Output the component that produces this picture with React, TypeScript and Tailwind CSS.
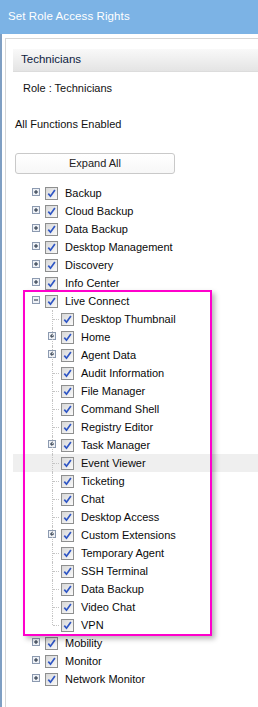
import React from 'react';

type Node = { label: string; expand?: 'plus' | 'minus'; children?: Node[] };

const tree: Node[] = [
  { label: 'Backup', expand: 'plus' },
  { label: 'Cloud Backup', expand: 'plus' },
  { label: 'Data Backup', expand: 'plus' },
  { label: 'Desktop Management', expand: 'plus' },
  { label: 'Discovery', expand: 'plus' },
  { label: 'Info Center', expand: 'plus' },
  {
    label: 'Live Connect',
    expand: 'minus',
    children: [
      { label: 'Desktop Thumbnail' },
      { label: 'Home', expand: 'plus' },
      { label: 'Agent Data', expand: 'plus' },
      { label: 'Audit Information' },
      { label: 'File Manager' },
      { label: 'Command Shell' },
      { label: 'Registry Editor' },
      { label: 'Task Manager', expand: 'plus' },
      { label: 'Event Viewer' },
      { label: 'Ticketing' },
      { label: 'Chat' },
      { label: 'Desktop Access' },
      { label: 'Custom Extensions', expand: 'plus' },
      { label: 'Temporary Agent' },
      { label: 'SSH Terminal' },
      { label: 'Data Backup' },
      { label: 'Video Chat' },
      { label: 'VPN' },
    ],
  },
  { label: 'Mobility', expand: 'plus' },
  { label: 'Monitor', expand: 'plus' },
  { label: 'Network Monitor', expand: 'plus' },
];

function Expander({ kind }: { kind: 'plus' | 'minus' }) {
  return (
    <svg width="8" height="8" viewBox="0 0 8 8" className="shrink-0 -mt-[3px]">
      <rect x="0.5" y="0.5" width="7" height="7" fill="#eef1f6" stroke="#8c9ab0" />
      <path d="M2 4h4" stroke="#1c2a3c" strokeWidth="1" />
      {kind === 'plus' && <path d="M4 2v4" stroke="#1c2a3c" strokeWidth="1" />}
    </svg>
  );
}

function Check() {
  return (
    <svg width="13" height="13" viewBox="0 0 13 13" className="shrink-0">
      <defs>
        <linearGradient id="cbg" x1="0" y1="0" x2="1" y2="1">
          <stop offset="0" stopColor="#d6d6d6" />
          <stop offset="1" stopColor="#fbfbfb" />
        </linearGradient>
      </defs>
      <rect x="0.5" y="0.5" width="12" height="12" fill="url(#cbg)" stroke="#8e8f8f" />
      <path d="M3.3 6.6l2.2 2.6 4.4-6.2" fill="none" stroke="#2f56c4" strokeWidth="1.7" />
    </svg>
  );
}

function Row({ node, level, last }: { node: Node; level: number; last?: boolean }) {
  const highlight = node.label === 'Event Viewer';
  return (
    <div
      className={`relative flex items-center h-[18px] ${highlight ? 'bg-[#efefef]' : ''} ${
        level === 0 ? 'pl-[19px]' : 'pl-[35px]'
      }`}
    >
      {level === 1 && (
        <>
          <span
            className={`absolute left-[39px] top-0 w-0 border-l border-dotted border-[#c4c4c4] ${
              last ? 'h-[9px]' : 'h-[18px]'
            }`}
          />
          {!node.expand && (
            <span className="absolute left-[40px] top-[9px] w-[6px] border-t border-dotted border-[#c4c4c4]" />
          )}
        </>
      )}
      <span className="w-[9px] flex items-center">{node.expand && <Expander kind={node.expand} />}</span>
      <span className="ml-[4px] flex">
        <Check />
      </span>
      <span className="ml-[7px] text-[11px] text-[#0a0a0a] whitespace-nowrap">{node.label}</span>
    </div>
  );
}

export default function App() {
  return (
    <div className="relative w-[258px] h-[707px] bg-white overflow-hidden font-['Liberation_Sans',Arial,sans-serif]">
      <div className="h-[34px] bg-[#7cb3e5] text-white text-[11.5px] pl-[8px] flex items-center tracking-[0.1px]">
        Set Role Access Rights
      </div>
      <div className="flex h-[673px]">
        <div className="w-[2px] bg-[#7f9fc3]" />
        <div className="w-[3px]" />
        <div className="flex-1 mt-[4px] border-l border-t border-[#d6d6d6] pl-[7px]">
          <div className="mt-[10px] h-[23px] flex items-center pl-[8px] bg-gradient-to-b from-[#f9f9f9] to-[#e4e4e4] border-b border-[#dcdcdc] text-[11.5px] text-[#0d2240]">
            Technicians
          </div>
          <div className="mt-[8px] h-[16px] flex items-center pl-[10px] text-[11px] text-[#111]">
            Role : Technicians
          </div>
          <div className="mt-[20px] h-[16px] flex items-center pl-[2px] text-[11px] text-[#111]">
            All Functions Enabled
          </div>
          <button className="mt-[21px] ml-[2px] w-[160px] h-[21px] rounded-[3px] border border-[#c9c9c9] bg-gradient-to-b from-white to-[#f7f7f7] text-[11px] text-[#222] flex items-center justify-center">
            Expand All
          </button>
          <div className="mt-[10px]">
            {tree.map((n) => (
              <React.Fragment key={n.label}>
                <Row node={n} level={0} />
                {n.children?.map((c, i) => (
                  <Row key={c.label} node={c} level={1} last={i === n.children!.length - 1} />
                ))}
              </React.Fragment>
            ))}
          </div>
        </div>
      </div>
      <div className="absolute left-[23px] top-[290px] w-[189px] h-[346px] border-2 border-[#ff00cc] shadow-[3px_3px_5px_rgba(0,0,0,0.28)] pointer-events-none" />
    </div>
  );
}
